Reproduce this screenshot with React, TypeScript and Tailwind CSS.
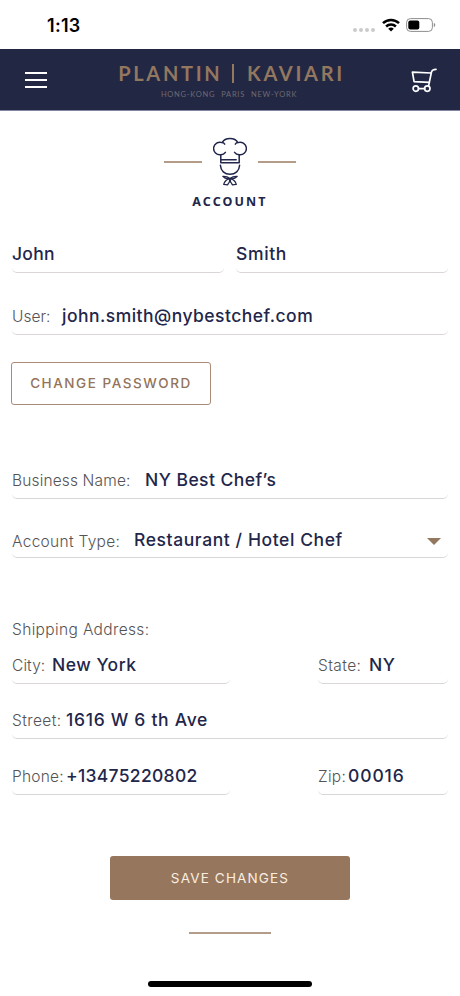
import type { ReactNode } from "react";

type FieldProps = {
  label?: string;
  value: string;
  className?: string;
  labelClass?: string;
  valueClass?: string;
  children?: ReactNode;
};

const Field = ({
  label,
  value,
  className = "",
  labelClass = "",
  valueClass = "",
  children,
}: FieldProps) => {
  return (
    <div
      className={`flex h-[34px] items-baseline rounded-[5px] border-b border-[#d9d6d5] pt-[3px] whitespace-nowrap ${className}`}
    >
      {label && (
        <label
          className={`shrink-0 text-[15.5px] leading-6 font-light text-[#545456] ${labelClass}`}
        >
          {label}
        </label>
      )}
      <span
        className={`text-[17.5px] leading-6 font-medium text-[#22264a] ${valueClass}`}
      >
        {value}
      </span>
      {children}
    </div>
  );
};

const StatusBar = () => {
  return (
    <div className="flex h-[49px] items-center justify-between pt-[2px] pr-[24px] pl-[47px]">
      <span className="text-[18px] font-semibold tracking-[0.3px] text-black">
        1:13
      </span>
      <div className="flex items-center">
        <div className="mt-[9px] mr-[7px] flex gap-[2px]">
          {[0, 1, 2, 3].map((dot) => (
            <i key={dot} className="h-[4px] w-[4px] rounded-full bg-[#cbcbcb]" />
          ))}
        </div>
        <svg width="18" height="14" viewBox="0 0 18 14" className="mr-[6px] -mt-[2px]">
          <g fill="none" stroke="#000" strokeWidth="2.5">
            <path d="M1 5.2a11.6 11.6 0 0 1 16 0" />
            <path d="M4.1 8.5a7.2 7.2 0 0 1 9.8 0" />
          </g>
          <path d="M9 13.6 6.2 10.8a4.2 4.2 0 0 1 5.6 0z" />
        </svg>
        <svg width="30" height="14" viewBox="0 0 30 14" className="-mt-[1px]">
          <rect
            x=".6"
            y=".6"
            width="25.8"
            height="12.8"
            rx="3.8"
            fill="none"
            stroke="#8d8d8d"
          />
          <rect x="2.3" y="2.4" width="11" height="9.2" rx="2" />
          <path d="M27.8 4.8c2 .8 2 3.6 0 4.4z" fill="#8d8d8d" />
        </svg>
      </div>
    </div>
  );
};

const Header = () => {
  return (
    <header className="flex h-[62px] items-start justify-between border-b border-[#8286a0] bg-[#222744] pr-[23px] pl-[25px]">
      <button className="mt-[23px] flex w-[22px] flex-col gap-[5px]">
        <span className="h-[2px] w-full bg-white" />
        <span className="h-[2px] w-full bg-white" />
        <span className="h-[2px] w-full bg-white" />
      </button>
      <div className="mt-[13px] ml-[5px] flex flex-col items-center font-[Lato,sans-serif]">
        <div className="flex items-center text-[20px] leading-[23px] font-bold text-[#93775f]">
          <span className="tracking-[2.7px]">PLANTIN</span>
          <i className="mr-[13px] ml-[10px] h-[19px] w-[1.5px] bg-[#93775f]" />
          <span className="tracking-[2.7px]">KAVIARI</span>
        </div>
        <div className="mr-[5px] flex gap-[6px] text-[7.5px] leading-[19px] tracking-[0.75px] text-[#6f6a70]">
          <span>HONG-KONG</span>
          <span>PARIS</span>
          <span>NEW-YORK</span>
        </div>
      </div>
      <svg
        width="26"
        height="26"
        viewBox="0 0 26 26"
        fill="none"
        stroke="#fff"
        strokeWidth="1.7"
        strokeLinecap="round"
        strokeLinejoin="round"
        className="mt-[18px]"
      >
        <path d="M25 2.300c-2.800 0-4 .5-4.600 3L17.600 18.800" />
        <path d="M20 6 1.400 5.200l1.700 9.400 15.200.8" />
        <circle cx="4.800" cy="21.600" r="2.700" />
        <circle cx="16.300" cy="21.600" r="2.700" />
        <path d="M7.600 21.600h6" />
      </svg>
    </header>
  );
};

const ChefIcon = () => {
  return (
    <svg
      width="34"
      height="49"
      viewBox="0 0 34 49"
      fill="none"
      stroke="#22264a"
      strokeWidth="1.5"
      strokeLinecap="round"
      strokeLinejoin="round"
    >
      <path d="M7.800 25.700V17.700A6.300 6.300 0 1 1 9.200 5.600C10.600 3 13.600 1.600 17 1.600s6.400 1.400 7.800 4a6.300 6.300 0 1 1 1.400 12.100v8z" />
      <path d="M9.200 5.600c.9 0 1.900.6 2.500 1.500M24.800 5.600c-.9 0-1.900.6-2.500 1.500M7.800 17.700c2 0 3.600-.8 4.600-2.300M26.200 17.700c-2 0-3.600-.8-4.600-2.300" />
      <path d="M8 22.700h15.200" />
      <path d="M7.400 28.300c.3 5.500 4.200 9 9.600 9s9.300-3.500 9.600-9" />
      <g strokeWidth="1.300">
        <path d="M9.800 39.400c2.800-.2 5 .4 7.200 2.200 2.200-1.800 4.400-2.400 7.200-2.200-1.700 2-4 2.800-7.200 2.200-3.200.6-5.500-.2-7.200-2.200z" />
        <path d="M17 41.600c-3.800.6-5.400 2.700-6.300 5.800l3.900.4c1.500-1.700 2.400-3.700 2.400-6.200zM17 41.600c3.800.6 5.400 2.700 6.300 5.800l-3.900.4c-1.500-1.700-2.400-3.700-2.400-6.200z" />
      </g>
    </svg>
  );
};

export default function App() {
  return (
    <div className="flex h-[996px] w-[460px] flex-col overflow-hidden bg-white font-[Inter,sans-serif]">
      <StatusBar />
      <Header />

      <main className="flex flex-col px-[12px]">
        <div className="mt-[26px] flex h-[49px] items-center justify-center gap-[11px]">
          <span className="mt-[1px] h-[1.5px] w-[38px] bg-[#b39c88]" />
          <ChefIcon />
          <span className="mt-[1px] h-[1.5px] w-[38px] bg-[#b39c88]" />
        </div>
        <h1 className="mt-[7px] text-center font-['Noto_Sans',sans-serif] text-[12.5px] leading-[18px] font-bold tracking-[2.1px] text-[#22264a]">
          ACCOUNT
        </h1>

        <div className="mt-[28px] flex gap-[12px]">
          <Field
            value="John"
            className="w-[212px]"
            valueClass="tracking-[0.3px]"
          />
          <Field
            value="Smith"
            className="w-[212px]"
            valueClass="tracking-[0.65px]"
          />
        </div>
        <Field
          label="User:"
          value="john.smith@nybestchef.com"
          className="mt-[28px]"
          labelClass="w-[50px]"
          valueClass="tracking-[0.48px]"
        />
        <button className="mt-[27px] -ml-px h-[43px] w-[200px] rounded-[3px] border border-[#a98b76] text-[13.5px] font-medium tracking-[1.55px] text-[#93735a]">
          CHANGE PASSWORD
        </button>

        <Field
          label="Business Name:"
          value="NY Best Chef’s"
          className="mt-[60px]"
          labelClass="w-[133px] tracking-[0.15px]"
          valueClass="tracking-[0.45px]"
        />
        <Field
          label="Account Type:"
          value="Restaurant / Hotel Chef"
          className="mt-[25px]"
          labelClass="relative top-[2px] w-[122px] tracking-[0.3px]"
          valueClass="relative top-[1px] tracking-[0.59px]"
        >
          <svg width="14" height="7" viewBox="0 0 14 7" className="mr-[7px] ml-auto">
            <path d="M0 0h14L7 7z" fill="#93775f" />
          </svg>
        </Field>

        <p className="mt-[60px] text-[15.5px] leading-6 font-light tracking-[0.36px] text-[#545456]">
          Shipping Address:
        </p>
        <div className="mt-[8px] flex justify-between">
          <Field
            label="City:"
            value="New York"
            className="w-[218px]"
            labelClass="w-[40px] tracking-[0.1px]"
            valueClass="tracking-[0.5px]"
          />
          <Field
            label="State:"
            value="NY"
            className="w-[130px]"
            labelClass="w-[51px] tracking-[0.4px]"
            valueClass="tracking-[0.5px]"
          />
        </div>
        <Field
          label="Street:"
          value="1616 W 6 th Ave"
          className="mt-[21px]"
          labelClass="w-[54px] tracking-[0.4px]"
          valueClass="tracking-[0.7px]"
        />
        <div className="mt-[22px] flex justify-between">
          <Field
            label="Phone:"
            value="+13475220802"
            className="w-[218px]"
            labelClass="w-[54px] tracking-[0.2px]"
            valueClass="tracking-[0.3px]"
          />
          <Field
            label="Zip:"
            value="00016"
            className="w-[130px]"
            labelClass="w-[30px] tracking-[0.3px]"
            valueClass="tracking-[0.9px]"
          />
        </div>

        <button className="mt-[61px] h-[44px] w-[240px] self-center rounded-[3px] bg-[#96765c] text-[13.5px] tracking-[1.15px] text-[#fbeee0]">
          SAVE CHANGES
        </button>
        <span className="mt-[32px] h-[1.5px] w-[82px] self-center bg-[#b39c88]" />
      </main>

      <div className="mt-auto mb-[9px] h-[6px] w-[164px] self-center rounded-full bg-black" />
    </div>
  );
}
